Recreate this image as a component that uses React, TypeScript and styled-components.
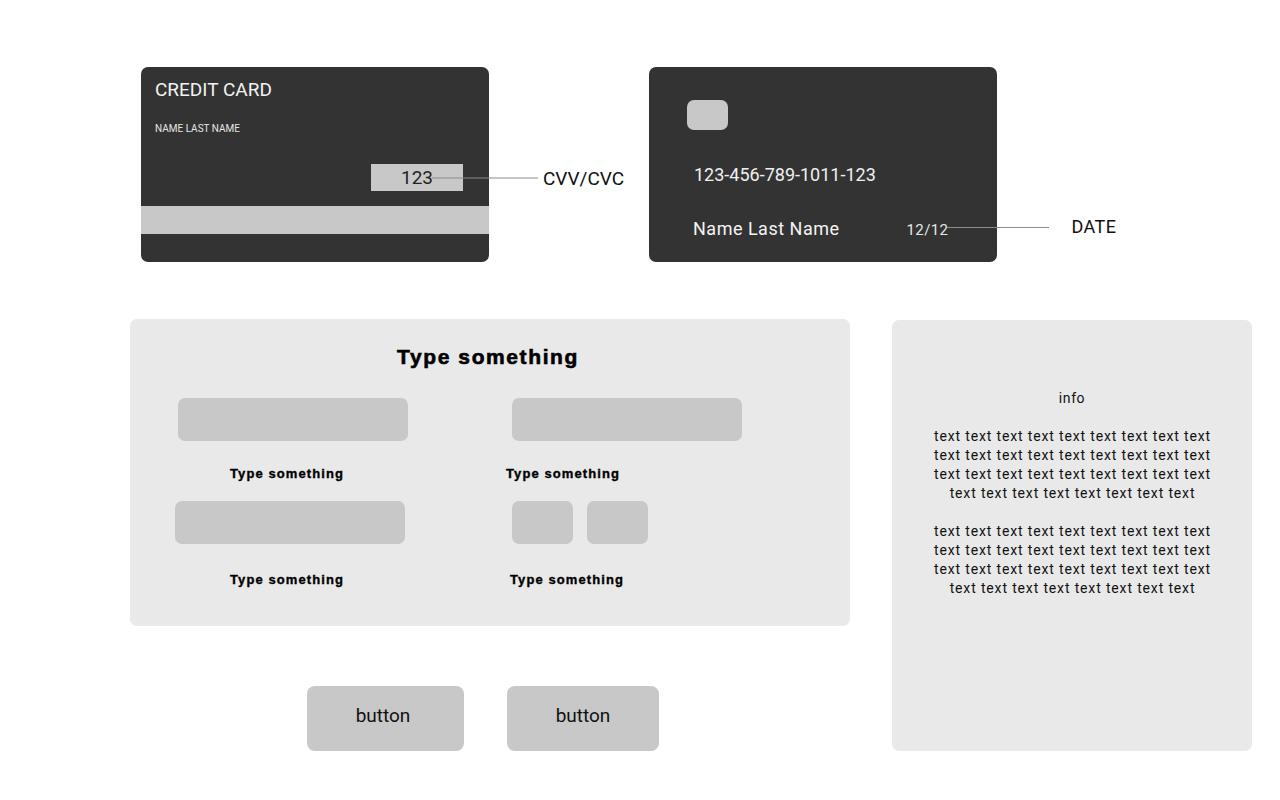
import React from "react";
import styled, { createGlobalStyle } from "styled-components";

const GlobalStyle = createGlobalStyle`
  html, body { margin: 0; padding: 0; background: #ffffff; }
  body { font-family: Roboto, "Liberation Sans", sans-serif; color: #111; }
  * { box-sizing: border-box; }
`;

const Page = styled.div`
  width: 1280px;
  height: 800px;
  overflow: hidden;
  display: flex;
  flex-direction: column;
`;

const CardsRow = styled.div`
  display: flex;
  gap: 160px;
  padding: 67px 0 0 141px;
`;

const Card = styled.div`
  width: 348px;
  height: 195px;
  background: #333333;
  border-radius: 7px;
  display: flex;
  flex-direction: column;
  color: #f2f2f2;
  font-family: Roboto, sans-serif;
`;

const CardTitle = styled.div`
  margin: 12px 0 0 14px;
  font-size: 19px;
  line-height: 22px;
`;

const CardSmallName = styled.div`
  margin: 22px 0 0 14px;
  font-size: 10px;
  line-height: 12px;
  color: #e6e6e6;
`;

const CvvBox = styled.div`
  position: relative;
  align-self: flex-end;
  margin: 29px 26px 0 0;
  width: 92px;
  height: 27px;
  background: #c8c8c8;
  color: #222;
  font-size: 19px;
  line-height: 27px;
  text-align: center;
`;

const Stripe = styled.div`
  margin-top: 15px;
  height: 28px;
  background: #c8c8c8;
`;

const Annotation = styled.div<{ $left: number; $lineWidth: number; $gap: number; $dy: number }>`
  position: absolute;
  left: ${(p) => p.$left}px;
  top: 50%;
  transform: translateY(calc(-50% + ${(p) => p.$dy}px));
  display: flex;
  align-items: center;
  gap: ${(p) => p.$gap}px;
  white-space: nowrap;
  &::before {
    content: "";
    display: block;
    width: ${(p) => p.$lineWidth}px;
    height: 1px;
    background: #8c8c8c;
  }
`;

const AnnotationLabel = styled.span<{ $size: number; $shift: number }>`
  font-family: Roboto, sans-serif;
  font-size: ${(p) => p.$size}px;
  color: #111;
  transform: translateY(${(p) => p.$shift}px);
`;

const Chip = styled.div`
  margin: 33px 0 0 38px;
  width: 41px;
  height: 30px;
  border-radius: 7px;
  background: #c8c8c8;
`;

const CardNumber = styled.div`
  margin: 34px 0 0 45px;
  font-size: 18px;
  line-height: 22px;
  color: #f0f0f0;
`;

const CardBottom = styled.div`
  margin: 32px 0 0 44px;
  display: flex;
  align-items: center;
`;

const HolderName = styled.div`
  font-size: 18px;
  line-height: 22px;
  letter-spacing: 0.5px;
  color: #f4f4f4;
`;

const Expiry = styled.div`
  position: relative;
  margin: 2px 0 0 67px;
  font-size: 15px;
  line-height: 18px;
  letter-spacing: 0.4px;
  color: #e6e6e6;
`;

const BottomRow = styled.div`
  display: flex;
  gap: 42px;
  padding: 57px 0 0 130px;
`;

const LeftColumn = styled.div`
  display: flex;
  flex-direction: column;
`;

const FormPanel = styled.div`
  width: 720px;
  height: 307px;
  background: #e9e9e9;
  border-radius: 7px;
  padding-top: 26px;
`;

const FormTitle = styled.h2`
  margin: 0;
  padding-right: 4px;
  text-align: center;
  font-family: "Liberation Sans", Arial, sans-serif;
  font-weight: 700;
  font-size: 21px;
  line-height: 24px;
  letter-spacing: 1.6px;
  -webkit-text-stroke: 0.6px #000;
  color: #000;
`;

const FieldGrid = styled.div`
  display: grid;
  grid-template-columns: 332px 1fr;
  margin-top: 29px;
  padding-left: 44px;
`;

const Field = styled.div<{ $top: number }>`
  display: flex;
  flex-direction: column;
  align-items: flex-start;
  margin-top: ${(p) => p.$top}px;
`;

const Inputs = styled.div<{ $offset: number }>`
  display: flex;
  gap: 14px;
  margin-left: ${(p) => p.$offset}px;
`;

const InputBox = styled.div<{ $w: number }>`
  width: ${(p) => p.$w}px;
  height: 43px;
  border-radius: 7px;
  background: #c8c8c8;
`;

const FieldLabel = styled.div<{ $offset: number; $gap: number }>`
  margin: ${(p) => p.$gap}px 0 0 ${(p) => p.$offset}px;
  font-family: "Liberation Sans", Arial, sans-serif;
  font-weight: 700;
  font-size: 13px;
  line-height: 16px;
  letter-spacing: 1.1px;
  -webkit-text-stroke: 0.35px #000;
  color: #000;
`;

const ButtonRow = styled.div`
  display: flex;
  gap: 43px;
  margin: 60px 0 0 177px;
`;

const Button = styled.button<{ $w: number }>`
  width: ${(p) => p.$w}px;
  height: 65px;
  border: none;
  border-radius: 8px;
  background: #c8c8c8;
  font-family: Roboto, sans-serif;
  font-size: 19px;
  color: #111;
  padding: 0 ${(p) => (p.$w > 155 ? 5 : 0)}px 6px 0;
  cursor: pointer;
`;

const InfoPanel = styled.div`
  margin-top: 1px;
  width: 360px;
  height: 431px;
  background: #e9e9e9;
  border-radius: 7px;
  padding-top: 69px;
  display: flex;
  flex-direction: column;
  align-items: center;
  font-family: Roboto, sans-serif;
  font-size: 14px;
  line-height: 19px;
  letter-spacing: 0.85px;
  color: #111;
  text-align: center;
`;

const InfoTitle = styled.div`
  letter-spacing: 0.6px;
`;

const InfoText = styled.p`
  margin: 19px 0 0;
  width: 292px;
  padding-left: 1px;
`;

const words = (n: number) => Array(n).fill("text").join(" ");

export default function App() {
  return (
    <Page>
      <GlobalStyle />
      <CardsRow>
        <Card>
          <CardTitle>CREDIT CARD</CardTitle>
          <CardSmallName>NAME LAST NAME</CardSmallName>
          <CvvBox>
            123
            <Annotation $left={61} $lineWidth={106} $gap={5} $dy={0}>
              <AnnotationLabel $size={19} $shift={0}>CVV/CVC</AnnotationLabel>
            </Annotation>
          </CvvBox>
          <Stripe />
        </Card>
        <Card>
          <Chip />
          <CardNumber>123-456-789-1011-123</CardNumber>
          <CardBottom>
            <HolderName>Name Last Name</HolderName>
            <Expiry>
              12/12
              <Annotation $left={40} $lineWidth={102} $gap={23} $dy={-3}>
                <AnnotationLabel $size={18} $shift={0}>DATE</AnnotationLabel>
              </Annotation>
            </Expiry>
          </CardBottom>
        </Card>
      </CardsRow>
      <BottomRow>
        <LeftColumn>
          <FormPanel>
            <FormTitle>Type something</FormTitle>
            <FieldGrid>
              <Field $top={0}>
                <Inputs $offset={4}>
                  <InputBox $w={230} />
                </Inputs>
                <FieldLabel $offset={56} $gap={25}>Type something</FieldLabel>
              </Field>
              <Field $top={0}>
                <Inputs $offset={6}>
                  <InputBox $w={230} />
                </Inputs>
                <FieldLabel $offset={0} $gap={25}>Type something</FieldLabel>
              </Field>
              <Field $top={19}>
                <Inputs $offset={1}>
                  <InputBox $w={230} />
                </Inputs>
                <FieldLabel $offset={56} $gap={28}>Type something</FieldLabel>
              </Field>
              <Field $top={19}>
                <Inputs $offset={6}>
                  <InputBox $w={61} />
                  <InputBox $w={61} />
                </Inputs>
                <FieldLabel $offset={4} $gap={28}>Type something</FieldLabel>
              </Field>
            </FieldGrid>
          </FormPanel>
          <ButtonRow>
            <Button $w={157}>button</Button>
            <Button $w={152}>button</Button>
          </ButtonRow>
        </LeftColumn>
        <InfoPanel>
          <InfoTitle>info</InfoTitle>
          <InfoText>{words(35)}</InfoText>
          <InfoText>{words(35)}</InfoText>
        </InfoPanel>
      </BottomRow>
    </Page>
  );
}
